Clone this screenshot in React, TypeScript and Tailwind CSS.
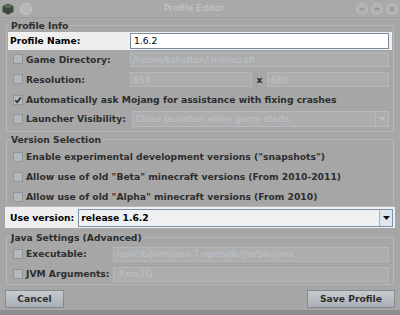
import React from "react";

const font = "font-['DejaVu_Sans',sans-serif]";

function Check({ checked = false }: { checked?: boolean }) {
  return (
    <div className="w-[10px] h-[10px] shrink-0 border border-[#8e959c] bg-[#b3b8bd] flex items-center justify-center">
      {checked && (
        <svg width="8" height="8" viewBox="0 0 8 8">
          <path d="M1.2 4.2 L3.2 6.2 L6.8 1.5" stroke="#2a2a2a" strokeWidth="1.6" fill="none" />
        </svg>
      )}
    </div>
  );
}

function DField({ text, className = "" }: { text: string; className?: string }) {
  return (
    <div
      className={`h-[15px] border border-[#b5b8bb] bg-[#adadad] flex items-center px-[2px] font-normal text-[#bcc3ca] overflow-hidden whitespace-nowrap ${className}`}
    >
      {text}
    </div>
  );
}

function Legend({ children }: { children: React.ReactNode }) {
  return <legend className="ml-[4px] px-0 pr-[2px] leading-[11px] text-[#2e2e2e]">{children}</legend>;
}

function Row({
  label,
  checked,
  labelW,
  h = "h-[20px]",
  children,
}: {
  label: string;
  checked?: boolean;
  labelW: string;
  h?: string;
  children?: React.ReactNode;
}) {
  return (
    <div className={`flex items-center pl-[6px] pr-[4px] ${h}`}>
      <div className={`flex items-center gap-[3px] shrink-0 ${labelW} text-[#2e2e2e] whitespace-nowrap`}>
        <Check checked={checked} />
        <span>{label}</span>
      </div>
      {children}
    </div>
  );
}

export default function App() {
  return (
    <div className={`w-[400px] h-[315px] bg-[#a6a6a6] ${font} text-[9.2px] font-bold overflow-hidden flex flex-col`}>
      {/* title bar */}
      <div className="h-[18px] bg-[#a9a9a9] border-b border-[#9d9d9d] flex items-center px-[2px] relative shrink-0">
        <svg width="12" height="12" viewBox="0 0 12 12" className="shrink-0">
          <path d="M6 0.5 L11.5 3 L11.5 9 L6 11.5 L0.5 9 L0.5 3 Z" fill="#3f4a3e" />
          <path d="M6 0.5 L11.5 3 L6 5.5 L0.5 3 Z" fill="#5b6b55" />
          <path d="M6 5.5 L6 11.5" stroke="#2c332b" strokeWidth="0.8" />
        </svg>
        <svg width="12" height="12" viewBox="0 0 12 12" className="ml-[6px] shrink-0">
          <circle cx="6" cy="6" r="5.5" fill="#b7b7b7" stroke="#c4c4c4" />
        </svg>
        <div className="flex-1 text-center font-normal text-[#c9c9c9] text-[9.5px]">Profile Editor</div>
        <div className="flex items-center gap-[3px] pr-[0px]">
          {["min", "max", "close"].map((k) => (
            <svg key={k} width="12" height="12" viewBox="0 0 12 12">
              <circle cx="6" cy="6" r="5.4" fill="#b1b1b1" stroke="#c2c2c2" strokeWidth="0.9" />
              {k === "min" && <path d="M4 5 L6 7 L8 5" stroke="#8f8f8f" strokeWidth="1.1" fill="none" />}
              {k === "max" && <path d="M4 7 L6 5 L8 7" stroke="#8f8f8f" strokeWidth="1.1" fill="none" />}
              {k === "close" && <path d="M4.2 4.2 L7.8 7.8 M7.8 4.2 L4.2 7.8" stroke="#8f8f8f" strokeWidth="1.1" />}
            </svg>
          ))}
        </div>
      </div>

      {/* Profile Info */}
      <fieldset className="mx-[6px] mt-[2px] border border-[#b7b7b7] pb-[3px]">
        <Legend>Profile Info</Legend>
        <div className="mt-[1px] mx-[1px] h-[18px] bg-[#efefef] flex items-center pl-[2px] pr-[3px]">
          <div className="w-[120px] shrink-0 text-black">Profile Name:</div>
          <div className="flex-1 h-[16px] bg-white border border-[#7d8c9c] flex items-center px-[3px] font-normal text-black">
            1.6.2
          </div>
        </div>
        <Row label="Game Directory:" labelW="w-[117px]" h="h-[19px]">
          <DField text="/home/bshelton/.minecraft" className="flex-1" />
        </Row>
        <Row label="Resolution:" labelW="w-[117px]" h="h-[21px]">
          <DField text="854" className="w-[122px]" />
          <span className="w-[15px] text-center text-[#2e2e2e]">x</span>
          <DField text="480" className="flex-1" />
        </Row>
        <Row label="Automatically ask Mojang for assistance with fixing crashes" checked labelW="w-auto" h="h-[20px]" />
        <Row label="Launcher Visibility:" labelW="w-[119px]" h="h-[18px]">
          <div className="flex-1 h-[16px] border border-[#b4bac1] bg-[#adadad] flex items-stretch">
            <div className="flex-1 flex items-center px-[3px] font-normal text-[#bcc3ca] whitespace-nowrap overflow-hidden">
              Close launcher when game starts
            </div>
            <div className="w-[13px] border-l border-[#b4bac1] flex items-center justify-center">
              <svg width="7" height="4" viewBox="0 0 7 4">
                <path d="M0 0 L7 0 L3.5 4 Z" fill="#bac1c8" />
              </svg>
            </div>
          </div>
        </Row>
      </fieldset>

      {/* Version Selection */}
      <fieldset className="mx-[6px] mt-[2px] border border-[#b7b7b7] pt-[3px]">
        <Legend>Version Selection</Legend>
        <div className="flex flex-col gap-[2px]">
          <Row label={'Enable experimental development versions ("snapshots")'} labelW="w-auto" h="h-[18px]" />
          <Row label={'Allow use of old "Beta" minecraft versions (From 2010-2011)'} labelW="w-auto" h="h-[18px]" />
          <Row label={'Allow use of old "Alpha" minecraft versions (From 2010)'} labelW="w-auto" h="h-[18px]" />
        </div>
      </fieldset>

      {/* Use version */}
      <div className="mx-[5px] mt-[0px] h-[21px] bg-[#efefef] flex items-center pl-[5px] pr-[2px] shrink-0">
        <span className="text-black mr-[4px] whitespace-nowrap">Use version:</span>
        <div className="flex-1 h-[18px] bg-[#eef0f2] border border-[#7e93ab] flex items-stretch">
          <div className="flex-1 flex items-center px-[2px] text-black">release 1.6.2</div>
          <div className="w-[13px] bg-[#dde5ed] border-l border-[#a3b3c4] flex items-center justify-center">
            <svg width="7" height="4" viewBox="0 0 7 4">
              <path d="M0 0 L7 0 L3.5 4 Z" fill="#111" />
            </svg>
          </div>
        </div>
      </div>

      {/* Java Settings */}
      <fieldset className="mx-[6px] mt-[4px] border border-[#b7b7b7] pt-[2px] pb-[1px]">
        <Legend>Java Settings (Advanced)</Legend>
        <div className="flex flex-col gap-[2px]">
          <Row label="Executable:" labelW="w-[100px]" h="h-[18px]">
            <DField text="/usr/lib/jvm/java-7-openjdk/jre/bin/java" className="flex-1" />
          </Row>
          <Row label="JVM Arguments:" labelW="w-[100px]" h="h-[18px]">
            <DField text="-Xmx1G" className="flex-1" />
          </Row>
        </div>
      </fieldset>

      {/* buttons */}
      <div className="flex justify-between px-[5px] mt-[5px] shrink-0">
        <div className="w-[59px] h-[18px] border border-[#868b91] bg-gradient-to-b from-[#c6cbd0] to-[#a9afb5] flex items-center justify-center text-[#2e2e2e]">
          Cancel
        </div>
        <div className="w-[88px] h-[18px] border border-[#868b91] bg-gradient-to-b from-[#c6cbd0] to-[#a9afb5] flex items-center justify-center text-[#2e2e2e]">
          Save Profile
        </div>
      </div>
      <div className="flex-1" />
      <div className="h-[5px] bg-[#8e8e8e] shrink-0" />
    </div>
  );
}
